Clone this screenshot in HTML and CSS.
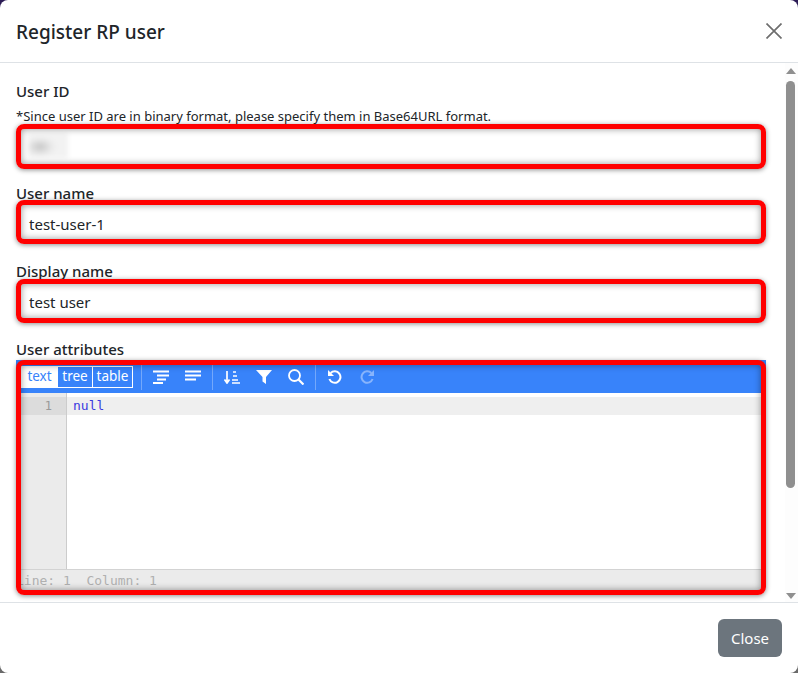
FILE: index.html
```html
<!DOCTYPE html>
<html lang="en">
<head>
<meta charset="utf-8">
<title>Register RP user</title>
<link rel="stylesheet" href="styles.css">
</head>
<body>
<div class="modal">
  <header class="modal-header">
    <h5 class="modal-title">Register RP user</h5>
    <svg class="close-icon" width="16" height="16" viewBox="0 0 16 16"><path d="M.5.5l15 15M15.5.5l-15 15" stroke="#6e6e6e" stroke-width="1.7" fill="none"/></svg>
  </header>
  <div class="modal-body">
    <div class="body-content">
      <label class="field-label">User ID</label>
      <div class="hint">*Since user ID are in binary format, please specify them in Base64URL format.</div>
      <div class="field field-id"><span class="blur-blob"></span><span class="mark mark-id"></span></div>
      <label class="field-label">User name</label>
      <div class="field">test-user-1<span class="mark mark-name"></span></div>
      <label class="field-label">Display name</label>
      <div class="field">test user<span class="mark mark-display"></span></div>
      <label class="field-label">User attributes</label>
      <div class="editor">
        <div class="menu">
          <div class="modes"><span class="mode mode-text active">text</span><span class="mode mode-tree">tree</span><span class="mode mode-table">table</span></div>
          <span class="sep"></span>
          <span class="tool"><svg width="16" height="14" viewBox="0 0 16 14"><path d="M0 1.500h16M4 5.500h12M4 9.500h9M0 13h10" stroke="#fff" stroke-width="2"/></svg></span>
          <span class="tool"><svg width="16" height="14" viewBox="0 0 16 14"><path d="M0 1.500h16M0 5.500h16M0 9.500h11" stroke="#fff" stroke-width="2"/></svg></span>
          <span class="sep"></span>
          <span class="tool"><svg width="16" height="14" viewBox="0 0 16 14"><path d="M3 1v12M.5 9.500L3 13l2.500-3.500" stroke="#fff" stroke-width="1.700" fill="none"/><path d="M9 2h3M9 6h4M8 10h6M8 13h8" stroke="#fff" stroke-width="1.400"/></svg></span>
          <span class="tool"><svg width="16" height="14" viewBox="0 0 16 14"><path d="M0 0h16L10 7v7L6.500 11.500V7z" fill="#fff"/></svg></span>
          <span class="tool"><svg width="16" height="16" viewBox="0 0 16 16"><circle cx="6.500" cy="6.500" r="5.500" stroke="#fff" stroke-width="1.800" fill="none"/><path d="M10.500 10.500L15.500 15.500" stroke="#fff" stroke-width="2.200"/></svg></span>
          <span class="sep"></span>
          <span class="tool"><svg width="16" height="14" viewBox="0 0 16 14"><path d="M3.700 3A5.700 5.700 0 1 1 2.400 9" stroke="#fff" stroke-width="2" fill="none"/><path d="M1 0v6h6z" fill="#fff"/></svg></span>
          <span class="tool tool-off"><svg width="16" height="14" viewBox="0 0 16 14"><path d="M12.300 3A5.700 5.700 0 1 0 13.600 9" stroke="#fff" stroke-width="2" fill="none"/><path d="M15 0v6H9z" fill="#fff"/></svg></span>
        </div>
        <div class="code">
          <div class="gutter"><div class="gutter-active">1</div></div>
          <div class="lines"><div class="line-active"><span class="kw">null</span></div></div>
        </div>
        <div class="status">Line: 1&nbsp;&nbsp;Column: 1</div>
        <span class="mark mark-editor"></span>
      </div>
    </div>
    <div class="scrollbar">
      <svg width="10" height="6" viewBox="0 0 10 6"><path d="M5 0l5 6H0z" fill="#8f8f8f"/></svg>
      <div class="track"><div class="thumb"></div></div>
      <svg width="10" height="6" viewBox="0 0 10 6"><path d="M5 6L0 0h10z" fill="#8f8f8f"/></svg>
    </div>
  </div>
  <footer class="modal-footer"><button class="btn">Close</button></footer>
</div>
</body>
</html>
```
FILE: styles.css
```css
* { box-sizing: border-box; }
html, body { margin: 0; height: 100%; }
body {
  width: 798px; height: 673px; overflow: hidden;
  background: linear-gradient(#2b1b55 50%, #6a6a6a 50%);
  font-family: "Noto Sans", "Liberation Sans", sans-serif;
  color: #212529;
}
.modal {
  width: 798px; height: 673px; background: #fff; border-radius: 8px;
  display: flex; flex-direction: column; overflow: hidden;
}
.modal-header {
  height: 63px; flex: none; border-bottom: 1px solid #dee2e6;
  display: flex; align-items: center; justify-content: space-between;
  padding: 1px 16px 0;
}
.modal-title { margin: 0; font-size: 19px; font-weight: 500; line-height: 24px; }
.close-icon { margin-top: -1px; }
.modal-body { height: 539px; flex: none; display: flex; overflow: hidden; }
.body-content { width: 785px; padding: 18px 19px 0 16px; flex: none; }
.field-label { display: block; font-size: 15px; font-weight: 500; line-height: 20px; }
.hint { font-size: 13px; line-height: 18px; margin-top: 6px; }
.field {
  position: relative; height: 38px; margin: 3px 0 17px; padding: 0 13px;
  font-size: 15px; line-height: 36px;
}
.field-id { margin: 2px 0 18px; }
.mark {
  position: absolute; left: 0; right: 0; top: 0; bottom: 0;
  border: 5px solid #f00; border-radius: 8px;
  box-shadow: 0 1px 5px rgba(0,0,0,.45), inset 0 0 7px rgba(0,0,0,.42);
  pointer-events: none;
}
.mark-id { top: -3px; bottom: -4px; }
.mark-name { top: -6px; bottom: 0; }
.mark-display { top: -5px; bottom: -1px; }
.mark-editor { bottom: -5px; }
.blur-blob {
  position: absolute; left: 12px; top: 6px; width: 40px; height: 25px;
  background: radial-gradient(ellipse 45% 45% at 30% 55%, #c6c6c6, #ececec 70%, #f2f2f2);
  filter: blur(2px);
}
.editor {
  position: relative; height: 230px; margin-top: 1px;
  display: flex; flex-direction: column;
}
.menu {
  height: 33px; flex: none; background: #3883fa;
  display: flex; align-items: center; padding-left: 5px; padding-top: 1px;
}
.modes { display: flex; height: 22px; width: 112px; border: 1px solid #fff; margin-right: 8px; flex: none; }
.mode {
  font-size: 13.500px; line-height: 19px; color: #fff; text-align: center;
  border-left: 1px solid #fff;
}
.mode-text { width: 35px; border-left: 0; }
.mode-tree { width: 35px; }
.mode-table { flex: 1; }
.mode.active { background: #fff; color: #3883fa; }
.sep { width: 1px; height: 25px; background: rgba(255,255,255,.3); margin: 0 3px; flex: none; }
.modes + .sep { margin-left: 0; }
.tool { width: 32px; flex: none; display: flex; justify-content: center; }
.tool-off { opacity: .4; }
.code {
  flex: 1; display: flex; min-height: 0; background: #fff;
  font-family: "DejaVu Sans Mono", "Liberation Mono", monospace; font-size: 13px;
}
.gutter { width: 51px; flex: none; background: #ebebeb; border-right: 1px solid #ccc; padding-top: 4px; }
.gutter-active { height: 18px; line-height: 18px; background: #dcdcdc; text-align: right; padding-right: 14px; color: #999; font-size: 12px; }
.lines { flex: 1; padding-top: 4px; }
.line-active { height: 18px; line-height: 18px; background: #efefef; padding-left: 6px; }
.kw { color: #3a3adf; }
.status {
  height: 21px; flex: none; background: #ebebeb; border-top: 1px solid #d3d3d3;
  font-family: "DejaVu Sans Mono", "Liberation Mono", monospace; font-size: 13px;
  line-height: 21px; color: #b0b0b0; white-space: pre;
}
.scrollbar {
  flex: 1; display: flex; flex-direction: column; align-items: center;
  padding: 5px 2px 3px 0; background: #fdfdfd;
}
.track { flex: 1; width: 9px; padding-top: 7px; }
.thumb { height: 407px; background: #8f8f8f; border-radius: 4.500px; }
.modal-footer {
  flex: 1; border-top: 1px solid #dee2e6;
  display: flex; align-items: center; justify-content: flex-end; padding: 0 16px;
}
.btn {
  width: 64px; height: 38px; background: #6c757d; color: #fff; border: 0; border-radius: 6px;
  font-family: inherit; font-size: 15px; padding: 0;
}
```
